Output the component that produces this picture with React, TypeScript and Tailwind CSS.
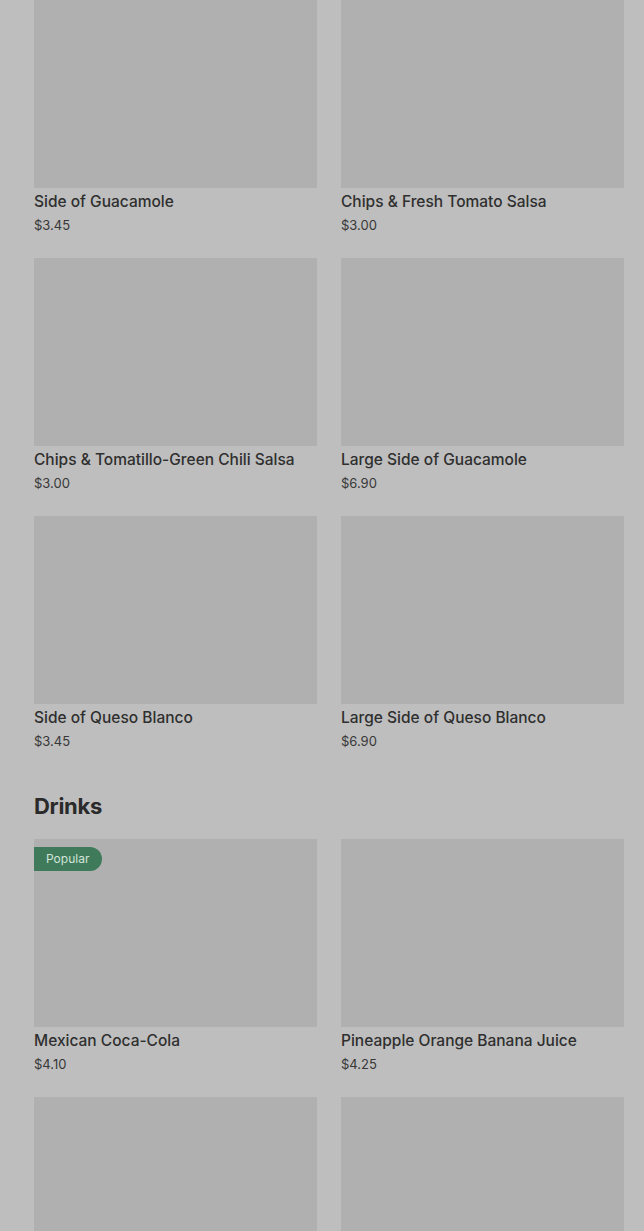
import React from "react";

interface MenuItem {
  name?: string;
  price?: string;
  popular?: boolean;
}

const SIDES: MenuItem[] = [
  { name: "Side of Guacamole", price: "$3.45" },
  { name: "Chips & Fresh Tomato Salsa", price: "$3.00" },
  { name: "Chips & Tomatillo-Green Chili Salsa", price: "$3.00" },
  { name: "Large Side of Guacamole", price: "$6.90" },
  { name: "Side of Queso Blanco", price: "$3.45" },
  { name: "Large Side of Queso Blanco", price: "$6.90" },
];

// last row is below the fold, only the images show
const DRINKS: MenuItem[] = [
  { name: "Mexican Coca-Cola", price: "$4.10", popular: true },
  { name: "Pineapple Orange Banana Juice", price: "$4.25" },
  {},
  {},
];

function ItemCard({ item }: { item: MenuItem }) {
  return (
    <div className="flex flex-col">
      <div className="relative h-[188px] bg-[#b0b0b0]">
        {item.popular && (
          <span className="absolute left-0 top-[8px] h-[24px] flex items-center pl-[12px] pr-[13px] rounded-r-full bg-[#3f7b5a] text-[12px] text-[#d3e3d9]">
            Popular
          </span>
        )}
      </div>
      {item.name && (
        <>
          <div className="mt-[4px] text-[15.5px] leading-[20px] font-medium text-[#2f2f2f]">
            {item.name}
          </div>
          <div className="mt-[4px] text-[13px] leading-[18px] text-[#383838]">
            {item.price}
          </div>
        </>
      )}
    </div>
  );
}

export default function App() {
  return (
    <div
      className="h-[1231px] overflow-hidden bg-[#bebebe] pl-[34px] pr-[20px]"
      style={{ fontFamily: "Inter, 'Liberation Sans', sans-serif" }}
    >
      {/* Sides grid */}
      <div className="grid grid-cols-2 gap-x-[24px] gap-y-[24px]">
        {SIDES.map((item, i) => (
          <ItemCard key={i} item={item} />
        ))}
      </div>

      {/* Drinks */}
      <h2 className="mt-[42px] mb-[19px] text-[22px] leading-[28px] font-bold text-[#2a2a2a] tracking-[-0.3px]">
        Drinks
      </h2>
      <div className="grid grid-cols-2 gap-x-[24px] gap-y-[24px]">
        {DRINKS.map((item, i) => (
          <ItemCard key={i} item={item} />
        ))}
      </div>
    </div>
  );
}
